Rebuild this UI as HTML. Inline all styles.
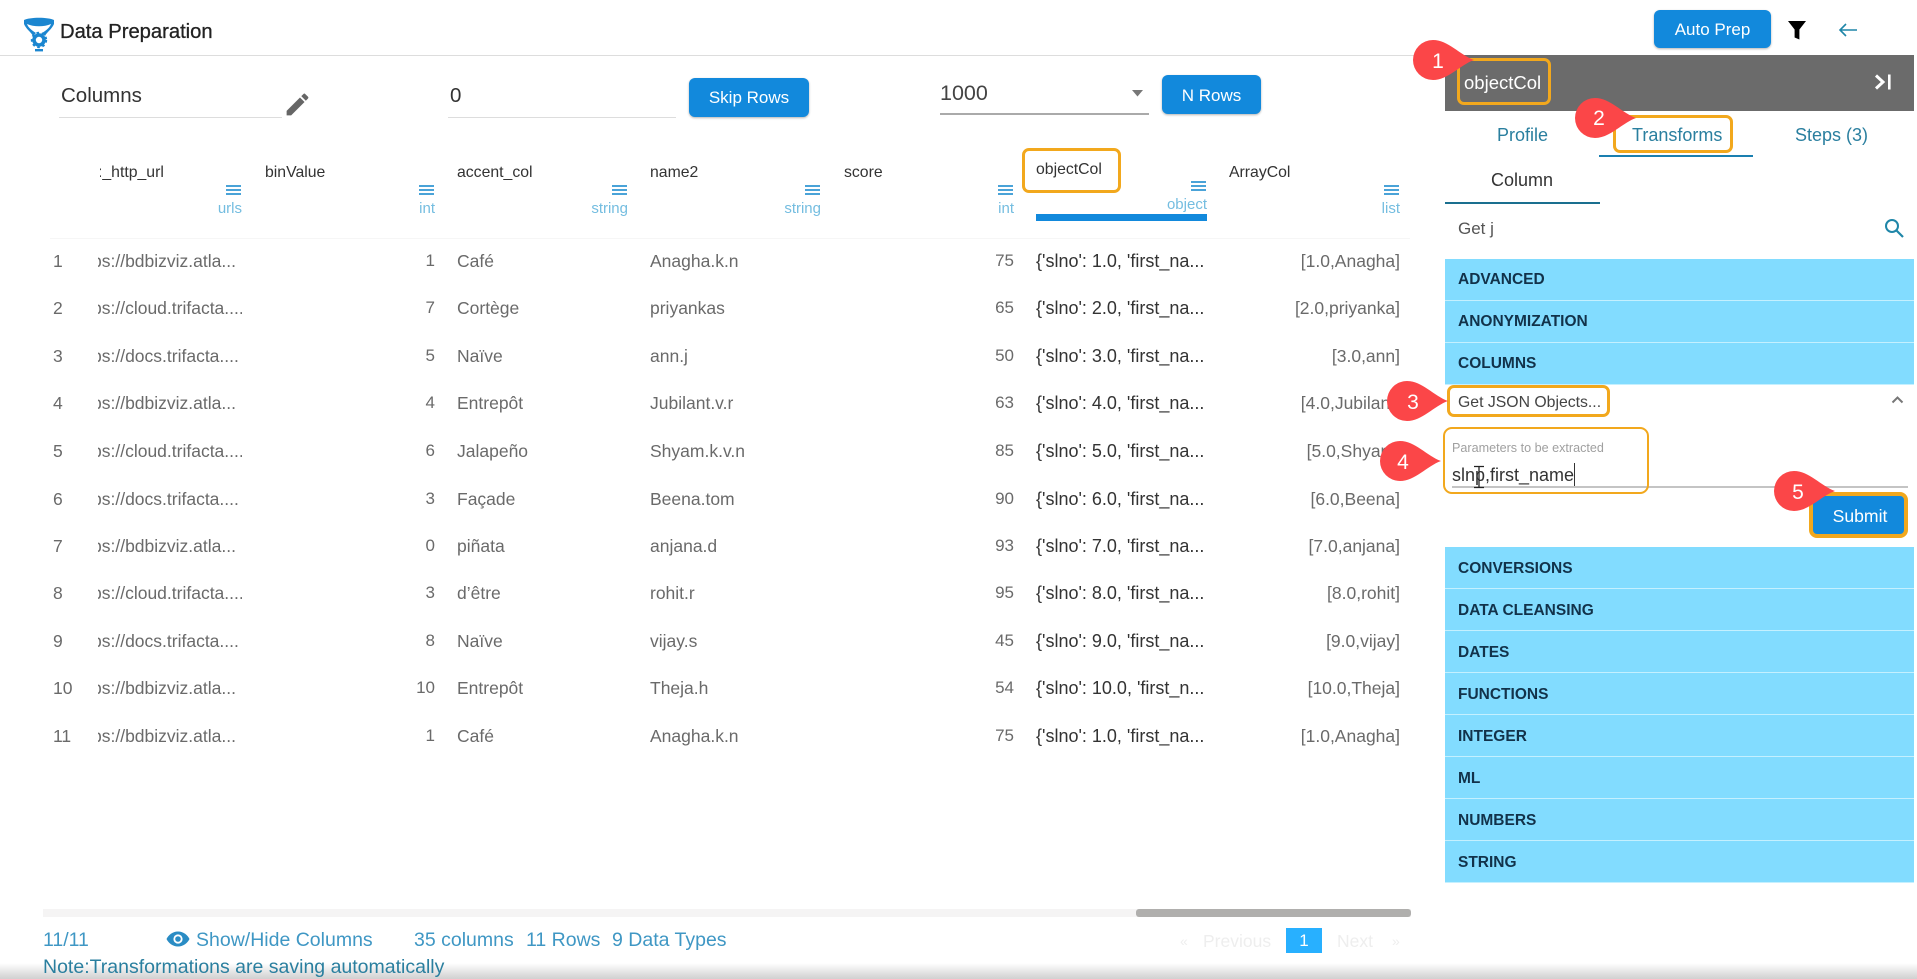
<!DOCTYPE html>
<html lang="en"><head><meta charset="utf-8"><title>Data Preparation</title>
<style>
html,body{margin:0;padding:0;width:1917px;height:979px;overflow:hidden;background:#fff;font-family:"Liberation Sans",sans-serif;}
#p{position:relative;width:1917px;height:979px;overflow:hidden;background:#fff}
#p div,#p span.a,#p svg{position:absolute}
.t{white-space:nowrap;line-height:24px;height:24px}
.h{font-size:15.8px;color:#333;margin-top:1px}
.c{font-size:17.5px;color:#6a6a6a}
.c.r[style*="width:50px"]{font-size:17px;margin-top:0}
.d{color:#333;font-size:18px}
.r{text-align:right}
.ty{font-size:15px;color:#74bde0;text-align:right;white-space:nowrap;line-height:18px;margin-top:1px}
.btn{background:#1289dc;color:#fff;border-radius:6px;text-align:center;box-shadow:0 1px 2px rgba(0,0,0,.3);font-size:17px}
.bar{left:1445px;width:469px;height:41px;background:#82dcff;box-shadow:0 1px 0 #c4f0ff;color:#12324a;font-weight:700;font-size:15.5px;line-height:43px;text-indent:13px}
.ob{border:3px solid #f2a81d;border-radius:7px;box-sizing:border-box}
.ham{width:15px;height:10px;border-top:2px solid #4aa3d8;border-bottom:2px solid #4aa3d8;box-sizing:border-box}
.ham i{display:block;height:2px;background:#4aa3d8;margin-top:2px}
.b{font-size:19.5px;color:#3f97c4;white-space:nowrap;line-height:24px}
.tab{font-size:18px;color:#2a7f9f;white-space:nowrap;line-height:24px;margin-top:1px}
.clip{left:98px;width:144px;height:24px;overflow:hidden}
.clip span{display:block;margin-left:-6px;white-space:nowrap;font-size:17.5px;line-height:24px;color:#6a6a6a}
</style></head><body><div id="p">

<!-- header -->
<div style="left:0;top:55px;width:1445px;height:1px;background:#ddd"></div>
<svg style="left:22px;top:16px" width="34" height="36" viewBox="0 0 34 36">
<path d="M2 4 C8 1 26 1 32 4 L32 8 C30 13 25 16 23 20 L20 17 C25 14 28 11 29 8 C22 11 12 11 5 8 C6 11 9 14 14 17 L11 20 C9 16 4 13 2 8Z" fill="#1b86d0"/>
<path d="M4 5 C10 3 24 3 30 5 C24 8 10 8 4 5Z" fill="#1b86d0"/>
<circle cx="17" cy="24" r="5" fill="none" stroke="#1b86d0" stroke-width="3.6"/>
<circle cx="17" cy="24" r="7.2" fill="none" stroke="#1b86d0" stroke-width="2" stroke-dasharray="2.6 2.6"/>
<rect x="13" y="33" width="8" height="2.4" fill="#1b86d0"/>
</svg>
<div class="t" style="left:60px;top:20px;font-size:20.2px;color:#222;-webkit-text-stroke:.3px #222">Data Preparation</div>

<div class="btn" style="left:1654px;top:10px;width:117px;height:38px;line-height:40px">Auto Prep</div>
<svg style="left:1787px;top:20px" width="20" height="20" viewBox="0 0 20 20"><path d="M1 1H19L12.4 9.5V19.5L7.6 17.5V9.5Z" fill="#000"/></svg>
<svg style="left:1838px;top:22px" width="20" height="16" viewBox="0 0 20 16"><path d="M19 8H2M8 2L2 8L8 14" fill="none" stroke="#1f86a8" stroke-width="1.6"/></svg>

<!-- toolbar -->
<div class="t" style="left:61px;top:84px;font-size:20.5px;color:#333">Columns</div>
<div style="left:59px;top:117px;width:223px;height:1px;background:#ddd"></div>
<svg style="left:283px;top:90px" width="29" height="29" viewBox="0 0 24 24"><path d="M3 17.25V21h3.75L17.81 9.94l-3.75-3.75L3 17.25zM20.71 7.04a1 1 0 000-1.41l-2.34-2.34a1 1 0 00-1.41 0l-1.83 1.83 3.75 3.75 1.83-1.83z" fill="#666"/></svg>
<div class="t" style="left:450px;top:84px;font-size:20.5px;color:#333">0</div>
<div style="left:448px;top:117px;width:228px;height:1px;background:#ddd"></div>
<div class="btn" style="left:689px;top:78px;width:120px;height:39px;line-height:40px">Skip Rows</div>
<div class="t" style="left:940px;top:81px;font-size:21.5px;color:#444">1000</div>
<div style="left:940px;top:113px;width:209px;height:2px;background:#aaa"></div>
<svg style="left:1132px;top:90px" width="12" height="7"><path d="M0 0H11L5.500 6.500Z" fill="#777"/></svg>
<div class="btn" style="left:1162px;top:75px;width:99px;height:39px;line-height:41px">N Rows</div>

<!-- table header -->
<div style="left:100px;top:160px;width:140px;height:26px;overflow:hidden"><div class="t h" style="left:-2px;top:0">:_http_url</div></div>
<div class="t h" style="left:265px;top:160px">binValue</div>
<div class="t h" style="left:457px;top:160px">accent_col</div>
<div class="t h" style="left:650px;top:160px">name2</div>
<div class="t h" style="left:844px;top:160px">score</div>
<div class="t h" style="left:1036px;top:157px">objectCol</div>
<div class="t h" style="left:1229px;top:160px">ArrayCol</div>
<div class="ham" style="left:226px;top:185px"><i></i></div>
<div class="ham" style="left:419px;top:185px"><i></i></div>
<div class="ham" style="left:612px;top:185px"><i></i></div>
<div class="ham" style="left:805px;top:185px"><i></i></div>
<div class="ham" style="left:998px;top:185px"><i></i></div>
<div class="ham" style="left:1191px;top:181px"><i></i></div>
<div class="ham" style="left:1384px;top:185px"><i></i></div>
<div class="ty" style="left:142px;width:100px;top:199px">urls</div>
<div class="ty" style="left:335px;width:100px;top:199px">int</div>
<div class="ty" style="left:528px;width:100px;top:199px">string</div>
<div class="ty" style="left:721px;width:100px;top:199px">string</div>
<div class="ty" style="left:914px;width:100px;top:199px">int</div>
<div class="ty" style="left:1107px;width:100px;top:195px">object</div>
<div class="ty" style="left:1300px;width:100px;top:199px">list</div>
<div style="left:1036px;top:214px;width:171px;height:7px;background:#1289dc"></div>
<div class="ob" style="left:1022px;top:148px;width:99px;height:45px"></div>
<div style="left:50px;top:238px;width:1360px;height:1px;background:#f6f6f6"></div>

<!-- rows -->
<div class="t c" style="left:53px;top:249px">1</div><div class="clip" style="top:249px"><span>ps://bdbizviz.atla...</span></div><div class="t c r" style="left:385px;width:50px;top:249px">1</div><div class="t c" style="left:457px;top:249px">Café</div><div class="t c" style="left:650px;top:249px">Anagha.k.n</div><div class="t c r" style="left:964px;width:50px;top:249px">75</div><div class="t c d" style="left:1036px;top:249px">{'slno': 1.0, 'first_na...</div><div class="t c r" style="left:1250px;width:150px;top:249px">[1.0,Anagha]</div>
<div class="t c" style="left:53px;top:296px">2</div><div class="clip" style="top:296px"><span>ps://cloud.trifacta....</span></div><div class="t c r" style="left:385px;width:50px;top:296px">7</div><div class="t c" style="left:457px;top:296px">Cortège</div><div class="t c" style="left:650px;top:296px">priyankas</div><div class="t c r" style="left:964px;width:50px;top:296px">65</div><div class="t c d" style="left:1036px;top:296px">{'slno': 2.0, 'first_na...</div><div class="t c r" style="left:1250px;width:150px;top:296px">[2.0,priyanka]</div>
<div class="t c" style="left:53px;top:344px">3</div><div class="clip" style="top:344px"><span>ps://docs.trifacta....</span></div><div class="t c r" style="left:385px;width:50px;top:344px">5</div><div class="t c" style="left:457px;top:344px">Naïve</div><div class="t c" style="left:650px;top:344px">ann.j</div><div class="t c r" style="left:964px;width:50px;top:344px">50</div><div class="t c d" style="left:1036px;top:344px">{'slno': 3.0, 'first_na...</div><div class="t c r" style="left:1250px;width:150px;top:344px">[3.0,ann]</div>
<div class="t c" style="left:53px;top:391px">4</div><div class="clip" style="top:391px"><span>ps://bdbizviz.atla...</span></div><div class="t c r" style="left:385px;width:50px;top:391px">4</div><div class="t c" style="left:457px;top:391px">Entrepôt</div><div class="t c" style="left:650px;top:391px">Jubilant.v.r</div><div class="t c r" style="left:964px;width:50px;top:391px">63</div><div class="t c d" style="left:1036px;top:391px">{'slno': 4.0, 'first_na...</div><div class="t c r" style="left:1250px;width:150px;top:391px">[4.0,Jubilant]</div>
<div class="t c" style="left:53px;top:439px">5</div><div class="clip" style="top:439px"><span>ps://cloud.trifacta....</span></div><div class="t c r" style="left:385px;width:50px;top:439px">6</div><div class="t c" style="left:457px;top:439px">Jalapeño</div><div class="t c" style="left:650px;top:439px">Shyam.k.v.n</div><div class="t c r" style="left:964px;width:50px;top:439px">85</div><div class="t c d" style="left:1036px;top:439px">{'slno': 5.0, 'first_na...</div><div class="t c r" style="left:1250px;width:150px;top:439px">[5.0,Shyam]</div>
<div class="t c" style="left:53px;top:487px">6</div><div class="clip" style="top:487px"><span>ps://docs.trifacta....</span></div><div class="t c r" style="left:385px;width:50px;top:487px">3</div><div class="t c" style="left:457px;top:487px">Façade</div><div class="t c" style="left:650px;top:487px">Beena.tom</div><div class="t c r" style="left:964px;width:50px;top:487px">90</div><div class="t c d" style="left:1036px;top:487px">{'slno': 6.0, 'first_na...</div><div class="t c r" style="left:1250px;width:150px;top:487px">[6.0,Beena]</div>
<div class="t c" style="left:53px;top:534px">7</div><div class="clip" style="top:534px"><span>ps://bdbizviz.atla...</span></div><div class="t c r" style="left:385px;width:50px;top:534px">0</div><div class="t c" style="left:457px;top:534px">piñata</div><div class="t c" style="left:650px;top:534px">anjana.d</div><div class="t c r" style="left:964px;width:50px;top:534px">93</div><div class="t c d" style="left:1036px;top:534px">{'slno': 7.0, 'first_na...</div><div class="t c r" style="left:1250px;width:150px;top:534px">[7.0,anjana]</div>
<div class="t c" style="left:53px;top:581px">8</div><div class="clip" style="top:581px"><span>ps://cloud.trifacta....</span></div><div class="t c r" style="left:385px;width:50px;top:581px">3</div><div class="t c" style="left:457px;top:581px">d’être</div><div class="t c" style="left:650px;top:581px">rohit.r</div><div class="t c r" style="left:964px;width:50px;top:581px">95</div><div class="t c d" style="left:1036px;top:581px">{'slno': 8.0, 'first_na...</div><div class="t c r" style="left:1250px;width:150px;top:581px">[8.0,rohit]</div>
<div class="t c" style="left:53px;top:629px">9</div><div class="clip" style="top:629px"><span>ps://docs.trifacta....</span></div><div class="t c r" style="left:385px;width:50px;top:629px">8</div><div class="t c" style="left:457px;top:629px">Naïve</div><div class="t c" style="left:650px;top:629px">vijay.s</div><div class="t c r" style="left:964px;width:50px;top:629px">45</div><div class="t c d" style="left:1036px;top:629px">{'slno': 9.0, 'first_na...</div><div class="t c r" style="left:1250px;width:150px;top:629px">[9.0,vijay]</div>
<div class="t c" style="left:53px;top:676px">10</div><div class="clip" style="top:676px"><span>ps://bdbizviz.atla...</span></div><div class="t c r" style="left:385px;width:50px;top:676px">10</div><div class="t c" style="left:457px;top:676px">Entrepôt</div><div class="t c" style="left:650px;top:676px">Theja.h</div><div class="t c r" style="left:964px;width:50px;top:676px">54</div><div class="t c d" style="left:1036px;top:676px">{'slno': 10.0, 'first_n...</div><div class="t c r" style="left:1250px;width:150px;top:676px">[10.0,Theja]</div>
<div class="t c" style="left:53px;top:724px">11</div><div class="clip" style="top:724px"><span>ps://bdbizviz.atla...</span></div><div class="t c r" style="left:385px;width:50px;top:724px">1</div><div class="t c" style="left:457px;top:724px">Café</div><div class="t c" style="left:650px;top:724px">Anagha.k.n</div><div class="t c r" style="left:964px;width:50px;top:724px">75</div><div class="t c d" style="left:1036px;top:724px">{'slno': 1.0, 'first_na...</div><div class="t c r" style="left:1250px;width:150px;top:724px">[1.0,Anagha]</div>

<!-- bottom -->
<div style="left:0;top:963px;width:1917px;height:16px;background:linear-gradient(#fff,#d0d0d0)"></div>
<div style="left:43px;top:909px;width:1368px;height:8px;background:#f5f4f4"></div>
<div style="left:1136px;top:909px;width:275px;height:8px;background:#b0afad;border-radius:3px"></div>
<div class="b" style="left:43px;top:928px">11/11</div>
<svg style="left:166px;top:929px" width="24" height="20" viewBox="0 0 24 20"><path d="M12 2.500C6.500 2.500 2.500 6 .5 10C2.500 14 6.500 17.500 12 17.500S21.500 14 23.500 10C21.500 6 17.500 2.500 12 2.500Z" fill="#2a8cc4"/><circle cx="12" cy="10" r="4.600" fill="#fff"/><circle cx="12" cy="10" r="2.800" fill="#2a8cc4"/></svg>
<div class="b" style="left:196px;top:928px">Show/Hide Columns</div>
<div class="b" style="left:414px;top:928px">35 columns</div>
<div class="b" style="left:526px;top:928px">11 Rows</div>
<div class="b" style="left:612px;top:928px">9 Data Types</div>
<div class="b" style="left:43px;top:955px;color:#2a7f9f">Note:Transformations are saving automatically</div>
<div class="b" style="left:1180px;top:929px;color:#eee;font-size:14px">«</div>
<div class="b" style="left:1203px;top:929px;color:#eee;font-size:17.5px">Previous</div>
<div style="left:1286px;top:928px;width:36px;height:25px;background:#28b0ff;color:#fff;text-align:center;line-height:25px;font-size:17px">1</div>
<div class="b" style="left:1337px;top:929px;color:#eee;font-size:17.5px">Next</div>
<div class="b" style="left:1392px;top:929px;color:#eee;font-size:14px">»</div>

<!-- right panel -->
<div style="left:1445px;top:55px;width:469px;height:56px;background:#6b6b6b"></div>
<div class="t" style="left:1464px;top:71px;color:#fff;font-size:18.5px">objectCol</div>
<div class="ob" style="left:1457px;top:58px;width:94px;height:47px;border-width:3px"></div>
<svg style="left:1873px;top:73px" width="20" height="18" viewBox="0 0 20 18"><path d="M3 2.500L10 9L3 15.500" fill="none" stroke="#fff" stroke-width="3"/><rect x="15" y="1.500" width="2.600" height="15" fill="#fff"/></svg>

<div class="tab" style="left:1497px;top:122px">Profile</div>
<div class="tab" style="left:1632px;top:122px">Transforms</div>
<div class="tab" style="left:1795px;top:122px">Steps (3)</div>
<div style="left:1599px;top:155px;width:154px;height:2px;background:#1a7fb0"></div>
<div class="ob" style="left:1613px;top:115px;width:120px;height:38px"></div>
<div class="tab" style="left:1491px;top:168px;color:#333;margin-top:0">Column</div>
<div style="left:1445px;top:202px;width:155px;height:2px;background:#1a6f8f"></div>
<div class="t" style="left:1458px;top:217px;font-size:17px;color:#555">Get j</div>
<svg style="left:1884px;top:218px" width="20" height="20" viewBox="0 0 20 20"><circle cx="8" cy="8" r="6" fill="none" stroke="#1f86a8" stroke-width="2"/><path d="M12.500 12.500L19 19" stroke="#1f86a8" stroke-width="2.200"/></svg>

<div class="bar" style="top:259px;line-height:42px">ADVANCED</div>
<div class="bar" style="top:301px;line-height:42px">ANONYMIZATION</div>
<div class="bar" style="top:343px;line-height:42px">COLUMNS</div>
<div class="t" style="left:1458px;top:391px;font-size:15.8px;color:#444">Get JSON Objects...</div>
<div class="ob" style="left:1447px;top:385px;width:163px;height:32px"></div>
<svg style="left:1891px;top:395px" width="13" height="9" viewBox="0 0 13 9"><path d="M1.500 7.500L6.500 2.500L11.500 7.500" fill="none" stroke="#777" stroke-width="2"/></svg>
<div class="t" style="left:1452px;top:436px;font-size:12.6px;color:#a0a0a0">Parameters to be extracted</div>
<div class="t" style="left:1452px;top:463px;font-size:18px;color:#333">slnp,first_name</div>
<div style="left:1452px;top:486px;width:456px;height:2px;background:#c4c4c4"></div>
<div style="left:1574px;top:463px;width:1px;height:23px;background:#333"></div>
<svg style="left:1472px;top:465px" width="14" height="24" viewBox="0 0 14 24"><path d="M2 1.500H12M7 1.500V22.500M2 22.500H12" stroke="#222" stroke-width="1.300" fill="none"/></svg>
<div class="ob" style="left:1443px;top:427px;width:206px;height:67px;border-width:2px;border-radius:9px"></div>
<div class="btn" style="left:1809px;top:492px;width:99px;height:46px;line-height:40px;padding-left:3px;border:4px solid #f2a81d;box-sizing:border-box;box-shadow:none;border-radius:8px;font-size:17.6px">Submit</div>

<div class="bar" style="top:547px">CONVERSIONS</div>
<div class="bar" style="top:589px">DATA CLEANSING</div>
<div class="bar" style="top:631px">DATES</div>
<div class="bar" style="top:673px">FUNCTIONS</div>
<div class="bar" style="top:715px">INTEGER</div>
<div class="bar" style="top:757px">ML</div>
<div class="bar" style="top:799px">NUMBERS</div>
<div class="bar" style="top:841px">STRING</div>

<!-- annotation pins -->
<svg style="left:0;top:0" width="1917" height="979" viewBox="0 0 1917 979">
<g fill="#fb4648">
<path transform="translate(1434,60)" d="M40 0C26-5 14-20-1-20A20 20 0 1 0-1 20C14 20 26 5 40 0Z"/>
<path transform="translate(1596,118)" d="M40 0C26-5 14-20-1-20A20 20 0 1 0-1 20C14 20 26 5 40 0Z"/>
<path transform="translate(1408,401)" d="M40 0C26-5 14-20-1-20A20 20 0 1 0-1 20C14 20 26 5 40 0Z"/>
<path transform="translate(1401,461)" d="M40 0C26-5 14-20-1-20A20 20 0 1 0-1 20C14 20 26 5 40 0Z"/>
<path transform="translate(1795,491)" d="M40 0C26-5 14-20-1-20A20 20 0 1 0-1 20C14 20 26 5 40 0Z"/>
</g>
<g fill="#fff" font-family="Liberation Sans, sans-serif" font-size="21" text-anchor="middle">
<text x="1438" y="68">1</text>
<text x="1599" y="125">2</text>
<text x="1413" y="409">3</text>
<text x="1403" y="469">4</text>
<text x="1798" y="499">5</text>
</g>
</svg>
</div></body></html>
